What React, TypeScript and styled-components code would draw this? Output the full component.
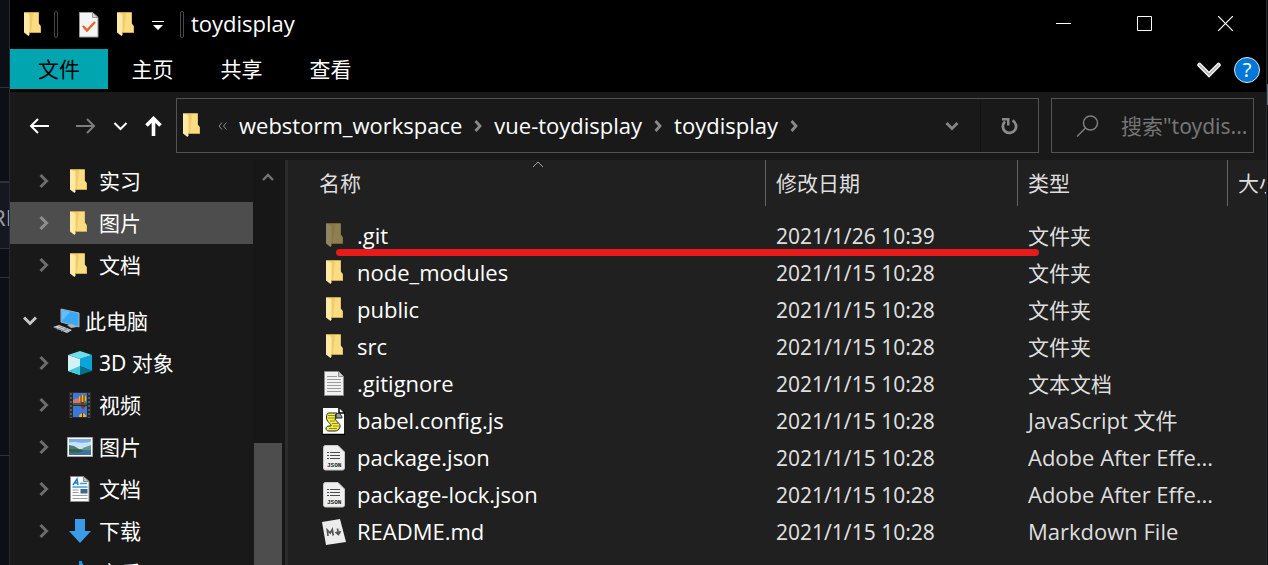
import React from "react";
import styled, { createGlobalStyle, css } from "styled-components";

const GlobalStyle = createGlobalStyle`
  * { box-sizing: border-box; }
  html, body { margin: 0; background: #0d0f16; }
  body, button, input {
    font-family: "Noto Sans", "Noto Sans CJK SC", sans-serif;
    font-size: 21px;
    line-height: 28px;
    color: #ffffff;
  }
  button { border: 0; padding: 0; background: none; }
  svg { display: block; flex: none; }
`;

const latin = css`
  font-family: "Open Sans", "Noto Sans CJK SC", sans-serif;
  font-size: 22px;
`;

const Screen = styled.div`
  display: grid;
  grid-template-columns: 10px minmax(0, 1fr) 2px;
  height: 100vh;
  overflow: hidden;
`;

/* Strip of the page that lies behind the window */
const Backdrop = styled.div`
  display: flex;
  flex-direction: column;
  background: #0d0f16;
  border-right: 1px solid #2a2a2c;
  overflow: hidden;
`;

const BackdropBlock = styled.div<{ $h: number; $panel?: boolean }>`
  flex: none;
  height: ${(p) => p.$h}px;
  border-bottom: 1px solid #30323a;
  ${(p) => p.$panel && css`
    background: #161821;
    border-top: 1px solid #30323a;
  `}
`;

const BackdropText = styled.span`
  display: block;
  padding-top: 20px;
  margin-left: -8px;
  font-size: 22px;
  white-space: nowrap;
  color: #9a9ca0;
`;

const RightEdge = styled.div`
  padding-top: 84px;
  background: #0d0f16;
  border-left: 1px solid #2a2a2c;
  &::before {
    content: "";
    display: block;
    height: 21px;
    background: #5b6a8c;
  }
`;

const Window = styled.main`
  display: flex;
  flex-direction: column;
  min-width: 0;
  min-height: 0;
  background: #191919;
`;

const TitleBar = styled.header`
  display: flex;
  align-items: center;
  height: 49px;
  padding-left: 14px;
  background: #000000;
`;

const TitleDivider = styled.span<{ $left: number }>`
  width: 4px;
  height: 27px;
  margin-left: ${(p) => p.$left}px;
  border: 1px solid #4a4a4a;
  border-radius: 2px;
`;

const QuickButton = styled.button<{ $left: number }>`
  margin-left: ${(p) => p.$left}px;
`;

const Title = styled.h1`
  flex: 1;
  margin: 0 0 4px 7px;
  ${latin}
  font-weight: 400;
  line-height: 28px;
`;

const WindowButton = styled.button`
  display: grid;
  place-items: center;
  width: 81px;
  height: 47px;
  margin-bottom: 2px;
`;

const Ribbon = styled.nav`
  display: flex;
  align-items: flex-start;
  height: 43px;
  background: #000000;
`;

const Tab = styled.button<{ $active?: boolean }>`
  width: ${(p) => (p.$active ? 98 : 89)}px;
  height: 40px;
  line-height: 40px;
  background: ${(p) => (p.$active ? "#00a5b0" : "transparent")};
  color: ${(p) => (p.$active ? "#000000" : "#ffffff")};
`;

const RibbonTools = styled.div`
  display: flex;
  align-items: center;
  gap: 13px;
  height: 42px;
  margin-left: auto;
  padding-right: 6px;
`;

const Help = styled.button`
  width: 26px;
  height: 26px;
  border: 1px solid #d8e8f6;
  border-radius: 50%;
  background: #0078d7;
  font-size: 20px;
  line-height: 24px;
`;

const NavBar = styled.div`
  display: flex;
  align-items: center;
  gap: 12px;
  height: 68px;
  padding: 0 12px 1px 19px;
  background: #191919;
`;

const NavButtons = styled.div`
  display: flex;
  align-items: center;
  width: 135px;
`;

const NavButton = styled.button<{ $left?: number }>`
  margin-left: ${(p) => p.$left ?? 0}px;
`;

const AddressBar = styled.div`
  display: flex;
  align-items: center;
  flex: 1;
  min-width: 0;
  height: 55px;
  padding-left: 6px;
  border: 1px solid #535353;
`;

const Crumbs = styled.ol`
  display: flex;
  align-items: center;
  gap: 12px;
  flex: 1;
  min-width: 0;
  margin: 0;
  padding: 0 0 0 18px;
  list-style: none;
  overflow: hidden;
`;

const Crumb = styled.li`
  display: flex;
  align-items: center;
  gap: 12px;
`;

const CrumbButton = styled.button`
  ${latin}
  padding-bottom: 2px;
`;

const AddressButton = styled.button<{ $divided?: boolean }>`
  display: grid;
  place-items: center;
  width: 58px;
  height: 53px;
  border-left: 1px solid ${(p) => (p.$divided ? "#131313" : "transparent")};
`;

const SearchBox = styled.label`
  display: flex;
  align-items: center;
  gap: 22px;
  width: 203px;
  height: 55px;
  padding-left: 24px;
  border: 1px solid #535353;
`;

const SearchInput = styled.input`
  flex: 1;
  min-width: 0;
  padding: 0;
  border: 0;
  outline: 0;
  background: none;
  &::placeholder { color: #757575; opacity: 1; }
`;

const Body = styled.div`
  display: grid;
  grid-template-columns: 243px 32px minmax(0, 1fr);
  flex: 1;
  min-height: 0;
`;

const Tree = styled.ul`
  margin: 0;
  padding: 0;
  list-style: none;
  overflow: hidden;
`;

const TreeRow = styled.li<{ $selected?: boolean; $root?: boolean }>`
  display: flex;
  align-items: center;
  height: 42px;
  margin-top: ${(p) => (p.$root ? 14 : 0)}px;
  padding-left: ${(p) => (p.$root ? 12 : 26)}px;
  background: ${(p) => (p.$selected ? "#4d4d4d" : "transparent")};
`;

const TreeArrow = styled.button`
  display: grid;
  place-items: center;
  width: 16px;
  margin-right: 15px;
`;

const TreeIcon = styled.span<{ $folder?: boolean }>`
  display: grid;
  place-items: center;
  width: 26px;
  height: 28px;
  margin-right: 6px;
  padding-right: ${(p) => (p.$folder ? 3 : 0)}px;
`;

const ScrollTrack = styled.div`
  display: flex;
  flex-direction: column;
  justify-content: space-between;
  align-items: center;
  padding: 12px 3px 0 0;
  background: #171717;
`;

const ScrollThumb = styled.div`
  width: 28px;
  height: 31%;
  background: #4d4d4d;
`;

const Files = styled.section`
  border-left: 3px solid #2b2b2b;
  background: #202020;
  overflow: hidden;
`;

const Table = styled.table`
  width: 100%;
  table-layout: fixed;
  border-collapse: separate;
  border-spacing: 0;
`;

const Head = styled.th<{ $first?: boolean }>`
  position: relative;
  height: 46px;
  padding: 0 0 0 ${(p) => (p.$first ? 31 : 10)}px;
  border-left: ${(p) => (p.$first ? "0" : "1px solid #636363")};
  color: #dedede;
  font-weight: 400;
  text-align: left;
  white-space: nowrap;
  overflow: hidden;
`;

const SortMark = styled.svg`
  position: absolute;
  top: 1px;
  left: calc(50% + 5px);
`;

const FileRows = styled.tbody`
  &::before {
    content: "";
    display: block;
    height: 11px;
  }
`;

const Cell = styled.td<{ $latin?: boolean }>`
  height: 37px;
  padding: 0 0 ${(p) => (p.$latin ? 2 : 0)}px 11px;
  color: #dedede;
  white-space: nowrap;
  ${(p) => p.$latin && latin}
`;

const NameCell = styled(Cell)<{ $marked?: boolean }>`
  position: relative;
  padding-left: 34px;
  color: #ffffff;
  ${(p) => p.$marked && css`
    &::after {
      content: "";
      position: absolute;
      z-index: 1;
      top: 32px;
      left: 48px;
      width: 703px;
      height: 7px;
      border-radius: 4px;
      background: #e81a1a;
    }
  `}
`;

const FileName = styled.span`
  display: flex;
  align-items: center;
  gap: 11px;
`;

const FileIcon = styled.span<{ $dim?: boolean }>`
  display: grid;
  place-items: center;
  width: 24px;
  height: 28px;
  padding-top: 2px;
  opacity: ${(p) => (p.$dim ? 0.5 : 1)};
`;

const Folder = () => (
  <svg width="17" height="25" viewBox="0 0 17 25" aria-hidden="true">
    <path d="M0 0h14.500v11l2 3v7H3z" fill="#f8d775" />
    <path d="M5 1h9.500v11l2 2v6.500H5z" fill="#f0cc69" />
    <path d="M9 1h5.500v11l2 2v6.500H7z" fill="#fbdc80" />
    <path d="M0 0l5.500 3v19.500L4.500 24 0 20.500z" fill="#ffe9a6" />
    <path d="M0 .5h14.500M5 20.500h11.500" stroke="#c9a750" strokeWidth="1" fill="none" />
  </svg>
);

const CheckDoc = () => (
  <svg width="20" height="26" viewBox="0 0 20 26" aria-hidden="true">
    <path d="M.5.5h13l5.500 5v19.500H.5z" fill="#f4f4f4" stroke="#9a9a9a" />
    <path d="M13.500.5v5h5.500z" fill="#d2d2d2" stroke="#9a9a9a" />
    <path d="M4 14l4 4.500L16 10" fill="none" stroke="#ee6324" strokeWidth="2.400" />
  </svg>
);

const Computer = () => (
  <svg width="27" height="26" viewBox="0 0 27 26" aria-hidden="true">
    <path d="M8 1l18 4v14L8 14z" fill="#39a9f5" stroke="#a7b4bd" />
    <path d="M9 2l8 2-8 9z" fill="#62bdfa" />
    <path d="M14 17l5-1 5 3-6 1z" fill="#aeb4ba" />
    <path d="M0 19l6-2 13 5-5 3z" fill="#cfd4d8" />
    <path d="M2 19.500l13 4M5 18l12 4.500M4 22l6-3M8 23.500l6-3" stroke="#7c848a" strokeWidth=".7" />
  </svg>
);

const Cube = () => (
  <svg width="26" height="26" viewBox="0 0 26 26" aria-hidden="true">
    <path d="M13 1l12 4-12 4L1 5z" fill="#6fdcea" />
    <path d="M1 5l12 4v16L1 21z" fill="#d2f3f5" />
    <path d="M13 9v8l12-3V5z" fill="#00b7d8" />
    <path d="M25 5v16l-12-5V9z" fill="#0aa6d9" />
    <path d="M1 21l12-5v9z" fill="#3fc9da" />
    <path d="M13 16l12 5-12 4z" fill="#00728c" />
  </svg>
);

const Video = () => (
  <svg width="22" height="26" viewBox="0 0 22 26" aria-hidden="true">
    <path d="M0 0h22v26H0z" fill="#2b2b2b" />
    <path d="M2 1v25M20 1v25" stroke="#666" strokeWidth="1.500" strokeDasharray="2 2" />
    <path d="M4 1h14v12H4zM4 14h14v11H4z" fill="#3c77d8" />
    <path d="M4 8l4-2 3 3v2H4z" fill="#e56a7c" />
    <path d="M4 11h14v2H4z" fill="#286e34" />
    <circle cx="13.500" cy="6.500" r="3.800" fill="#e7b923" />
    <path d="M12 3v7M15 3v7" stroke="#64201b" />
    <path d="M12 10h3v3h-3zM11.500 14h5l-2.500 3.500z" fill="#8e2b24" />
    <path d="M10 25c0-5 7-5 7 0z" fill="#e7b923" />
    <path d="M13.500 21v4" stroke="#64201b" />
  </svg>
);

const Picture = () => (
  <svg width="26" height="20" viewBox="0 0 26 20" aria-hidden="true">
    <path d="M.5.5h25v19H.5z" fill="#fff" stroke="#a5a5a5" />
    <path d="M2 2h22v9H2z" fill="#78aef0" />
    <path d="M2 5.500c6-2 14 2 22-1V12H2z" fill="#c8e4f6" />
    <path d="M2 8l5 1 5 3h12v2H2z" fill="#47806b" />
    <path d="M16 11l8-3v5h-9z" fill="#5f9a86" />
    <path d="M2 13h22v5H2z" fill="#3f72a0" />
    <path d="M2 12h9l6 2-6 1.500H2z" fill="#35624c" />
  </svg>
);

const DocumentIcon = () => (
  <svg width="20" height="26" viewBox="0 0 20 26" aria-hidden="true">
    <path d="M.5.5h13l5.500 5v20H.5z" fill="#fcfcfc" stroke="#8b8b8b" />
    <path d="M13.500.5v5h5.500z" fill="#c9c9c9" stroke="#8b8b8b" />
    <path d="M3 9l4-6 1 6M4.500 7H8" stroke="#1985c9" strokeWidth="1.500" fill="none" />
    <path d="M10 7.500h7M2.500 11h15" stroke="#3b9ed8" strokeWidth="1.300" />
    <path d="M2.500 14h6M2.500 16.500h6M2.500 19.500h15M2.500 22.500h15" stroke="#9d9d9d" />
    <path d="M10.500 13h7v4.500h-7z" fill="#38688c" />
  </svg>
);

const Download = () => (
  <svg width="22" height="24" viewBox="0 0 22 24" aria-hidden="true">
    <path d="M6 0h10v12h6L11 24 0 12h6z" fill="#3a9be9" />
  </svg>
);

const Music = () => (
  <svg width="26" height="26" viewBox="0 0 26 26" aria-hidden="true">
    <path d="M12 1h3c0 5 7 6 6 13-1-4-4-4-6-4v10a5 4 0 1 1-3-3z" fill="#1698ea" />
  </svg>
);

const TextFile = () => (
  <svg width="20" height="25" viewBox="0 0 20 25" aria-hidden="true">
    <path d="M.5.5h14l5 5v19H.5z" fill="#f1f1f1" stroke="#8d8d8d" />
    <path d="M14.500.5v5h5" fill="#d0d0d0" stroke="#8d8d8d" />
    <path d="M3 5.500h10M3 8.500h14M3 11.500h14M3 14.500h14M3 17.500h14M3 20.500h14" stroke="#9b9b9b" />
  </svg>
);

const ScriptFile = () => (
  <svg width="24" height="27" viewBox="0 0 24 27" aria-hidden="true">
    <path d="M1 0h16l5 5v21H1z" fill="#fff" />
    <path d="M17 0v5h6M0 26.500h23" fill="none" stroke="#000" strokeWidth="1.500" />
    <path d="M6.500 5H15c-2 2-2 4-1 6h-1c0 2 6 4 5 8-1 3-3 4-5 4H7c-4 0-4-5 0-5h2c1-2-5-4-4.500-9 0-2 1-4 2-4z" fill="#f1ee4c" stroke="#222" />
    <path d="M14 6c3-2 6 1 6 4h-6z" fill="#9b9b9b" stroke="#222" />
    <path d="M6 7.500h7M6 10h7M8 13h5M10 15.500h6M11 18h6M7 20.500h8" stroke="#8f8a18" />
  </svg>
);

const JsonText = styled.text`
  font: 700 6px "Liberation Mono", monospace;
`;

const JsonFile = () => (
  <svg width="22" height="26" viewBox="0 0 22 26" aria-hidden="true">
    <path d="M2 .5h13l6.500 6.500v16a2 2 0 0 1-2 2H2.500a2 2 0 0 1-2-2V2.500a2 2 0 0 1 2-2z" fill="#f0efef" stroke="#c8c8c8" />
    <path d="M4 7.500h2M7 7.500h10M4 10.500h2M7 10.500h10M4 13.500h2M7 13.500h10" stroke="#4a4a4a" strokeWidth="1.200" />
    <JsonText x="4" y="21.500" fill="#222">JSON</JsonText>
  </svg>
);

const MarkdownFile = () => (
  <svg width="24" height="27" viewBox="0 0 24 27" aria-hidden="true">
    <path d="M0 3L18 0l6 23-20 3z" fill="#ececec" />
    <path d="M6 17l-.7-6 3 3 2-3.500 1 6M15.500 9.500l.8 5.500M13.500 13l3 2.500 2-3.500" fill="none" stroke="#555" strokeWidth="1.700" />
  </svg>
);

type TreeEntry = { label: string; icon: React.ReactNode; folder?: boolean; selected?: boolean; root?: boolean };

const tree: TreeEntry[] = [
  { label: "实习", icon: <Folder />, folder: true },
  { label: "图片", icon: <Folder />, folder: true, selected: true },
  { label: "文档", icon: <Folder />, folder: true },
  { label: "此电脑", icon: <Computer />, root: true },
  { label: "3D 对象", icon: <Cube /> },
  { label: "视频", icon: <Video /> },
  { label: "图片", icon: <Picture /> },
  { label: "文档", icon: <DocumentIcon /> },
  { label: "下载", icon: <Download /> },
  { label: "音乐", icon: <Music /> },
];

type FileEntry = { name: string; date: string; type: string; icon: React.ReactNode; hidden?: boolean };

const files: FileEntry[] = [
  { name: ".git", date: "2021/1/26 10:39", type: "文件夹", icon: <Folder />, hidden: true },
  { name: "node_modules", date: "2021/1/15 10:28", type: "文件夹", icon: <Folder /> },
  { name: "public", date: "2021/1/15 10:28", type: "文件夹", icon: <Folder /> },
  { name: "src", date: "2021/1/15 10:28", type: "文件夹", icon: <Folder /> },
  { name: ".gitignore", date: "2021/1/15 10:28", type: "文本文档", icon: <TextFile /> },
  { name: "babel.config.js", date: "2021/1/15 10:28", type: "JavaScript 文件", icon: <ScriptFile /> },
  { name: "package.json", date: "2021/1/15 10:28", type: "Adobe After Effe...", icon: <JsonFile /> },
  { name: "package-lock.json", date: "2021/1/15 10:28", type: "Adobe After Effe...", icon: <JsonFile /> },
  { name: "README.md", date: "2021/1/15 10:28", type: "Markdown File", icon: <MarkdownFile /> },
];

const crumbs = ["webstorm_workspace", "vue-toydisplay", "toydisplay"];

export default function App() {
  return (
    <Screen>
      <GlobalStyle />
      <Backdrop>
        <BackdropBlock $h={88} />
        <BackdropBlock $h={94} />
        <BackdropBlock $h={67} $panel>
          <BackdropText>RE</BackdropText>
        </BackdropBlock>
        <BackdropBlock $h={29} />
        <BackdropBlock $h={178} />
      </Backdrop>

      <Window>
        <TitleBar>
          <Folder />
          <TitleDivider $left={13} />
          <QuickButton $left={21} aria-label="属性"><CheckDoc /></QuickButton>
          <QuickButton $left={18} aria-label="新建文件夹"><Folder /></QuickButton>
          <QuickButton $left={17} aria-label="自定义快速访问工具栏">
            <svg width="14" height="10" viewBox="0 0 14 10" aria-hidden="true">
              <path d="M1 1h12v1H1zM2 5h10L7 10z" fill="#fff" />
            </svg>
          </QuickButton>
          <TitleDivider $left={15} />
          <Title>toydisplay</Title>
          <WindowButton aria-label="最小化">
            <svg width="15" height="15" viewBox="0 0 15 15"><path d="M0 7.500h15" stroke="#fff" /></svg>
          </WindowButton>
          <WindowButton aria-label="最大化">
            <svg width="15" height="15" viewBox="0 0 15 15"><path d="M.5.5h14v14H.5z" fill="none" stroke="#fff" /></svg>
          </WindowButton>
          <WindowButton aria-label="关闭">
            <svg width="15" height="15" viewBox="0 0 15 15"><path d="M0 0l15 15M15 0L0 15" stroke="#fff" strokeWidth="1.200" /></svg>
          </WindowButton>
        </TitleBar>

        <Ribbon>
          <Tab $active>文件</Tab>
          <Tab>主页</Tab>
          <Tab>共享</Tab>
          <Tab>查看</Tab>
          <RibbonTools>
            <NavButton aria-label="展开功能区">
              <svg width="24" height="16" viewBox="0 0 24 16" aria-hidden="true">
                <path d="M2.500 3L12 12.500 21.500 3" fill="none" stroke="#f0f0f0" strokeWidth="4.500" strokeLinecap="round" />
                <path d="M2.500 3L12 12.500 21.500 3" fill="none" stroke="#b0b0b0" strokeWidth="1.500" strokeLinecap="round" />
              </svg>
            </NavButton>
            <Help aria-label="帮助">?</Help>
          </RibbonTools>
        </Ribbon>

        <NavBar>
          <NavButtons>
            <NavButton aria-label="后退">
              <svg width="21" height="16" viewBox="0 0 21 16"><path d="M20 8H2M9 1L2 8l7 7" fill="none" stroke="#fff" strokeWidth="2" /></svg>
            </NavButton>
            <NavButton $left={25} aria-label="前进">
              <svg width="21" height="16" viewBox="0 0 21 16"><path d="M1 8h18M12 1l7 7-7 7" fill="none" stroke="#7d7d7d" strokeWidth="2" /></svg>
            </NavButton>
            <NavButton $left={17} aria-label="最近浏览的位置">
              <svg width="15" height="10" viewBox="0 0 15 10"><path d="M1.500 2l6 6 6-6" fill="none" stroke="#fff" strokeWidth="2" /></svg>
            </NavButton>
            <NavButton $left={17} aria-label="上移">
              <svg width="17" height="20" viewBox="0 0 17 20"><path d="M8.500 20V3M1.500 9.500l7-7 7 7" fill="none" stroke="#fff" strokeWidth="3.600" /></svg>
            </NavButton>
          </NavButtons>
          <AddressBar>
            <Folder />
            <Crumbs>
              <Crumb>
                <svg width="9" height="8" viewBox="0 0 9 8" aria-hidden="true"><path d="M4 .5L1 4l3 3.500M8.500.5L5.500 4l3 3.500" fill="none" stroke="#8a8a8a" /></svg>
              </Crumb>
              {crumbs.map((c) => (
                <Crumb key={c}>
                  <CrumbButton>{c}</CrumbButton>
                  <svg width="8" height="12" viewBox="0 0 8 12" aria-hidden="true"><path d="M1.500 1L6 6l-4.500 5" fill="none" stroke="#8a8a8a" strokeWidth="2.800" /></svg>
                </Crumb>
              ))}
            </Crumbs>
            <AddressButton aria-label="以前的位置">
              <svg width="14" height="10" viewBox="0 0 14 10"><path d="M1.500 2L7 7.500 12.500 2" fill="none" stroke="#858585" strokeWidth="2.800" /></svg>
            </AddressButton>
            <AddressButton $divided aria-label="刷新">
              <svg width="17" height="18" viewBox="0 0 17 18">
                <path d="M11.500 3.500A6.600 6.600 0 1 1 4 4.500" fill="none" stroke="#8a8a8a" strokeWidth="2.800" />
                <path d="M1 1h7.500v7.500H6V3.500H1z" fill="#8a8a8a" />
              </svg>
            </AddressButton>
          </AddressBar>
          <SearchBox>
            <svg width="23" height="22" viewBox="0 0 23 22" aria-hidden="true">
              <circle cx="14.500" cy="8" r="7" fill="none" stroke="#7d7d7d" strokeWidth="1.500" />
              <path d="M9.500 13L1 21.500" stroke="#7d7d7d" strokeWidth="1.500" />
            </svg>
            <SearchInput aria-label="搜索" placeholder={'搜索"toydis...'} />
          </SearchBox>
        </NavBar>

        <Body>
          <Tree>
            {tree.map((t, i) => (
              <TreeRow key={i} $selected={t.selected} $root={t.root}>
                <TreeArrow aria-label={t.root ? "折叠" : "展开"}>
                  {t.root ? (
                    <svg width="14" height="10" viewBox="0 0 14 10"><path d="M1 1.500l6 6 6-6" fill="none" stroke="#c8c8c8" strokeWidth="3" /></svg>
                  ) : (
                    <svg width="10" height="14" viewBox="0 0 10 14"><path d="M1.500 1l6 6-6 6" fill="none" stroke={t.selected ? "#8e8e8e" : "#6c6c6c"} strokeWidth="3" /></svg>
                  )}
                </TreeArrow>
                <TreeIcon $folder={t.folder}>{t.icon}</TreeIcon>
                {t.label}
              </TreeRow>
            ))}
          </Tree>
          <ScrollTrack>
            <svg width="12" height="9" viewBox="0 0 12 9" aria-hidden="true"><path d="M1 8l5-5 5 5" fill="none" stroke="#747474" strokeWidth="2.400" /></svg>
            <ScrollThumb />
          </ScrollTrack>
          <Files>
            <Table>
              <colgroup>
                <col width="477" />
                <col width="252" />
                <col width="210" />
                <col />
              </colgroup>
              <thead>
                <tr>
                  <Head $first>
                    名称
                    <SortMark width="12" height="7" viewBox="0 0 12 7" aria-hidden="true">
                      <path d="M1 6l5-5 5 5" fill="none" stroke="#a5a5a5" />
                    </SortMark>
                  </Head>
                  <Head>修改日期</Head>
                  <Head>类型</Head>
                  <Head>大小</Head>
                </tr>
              </thead>
              <FileRows>
                {files.map((f) => (
                  <tr key={f.name}>
                    <NameCell $latin $marked={f.hidden}>
                      <FileName>
                        <FileIcon $dim={f.hidden}>{f.icon}</FileIcon>
                        {f.name}
                      </FileName>
                    </NameCell>
                    <Cell>{f.date}</Cell>
                    <Cell $latin={/[A-Za-z]/.test(f.type)}>{f.type}</Cell>
                    <Cell />
                  </tr>
                ))}
              </FileRows>
            </Table>
          </Files>
        </Body>
      </Window>
      <RightEdge />
    </Screen>
  );
}
